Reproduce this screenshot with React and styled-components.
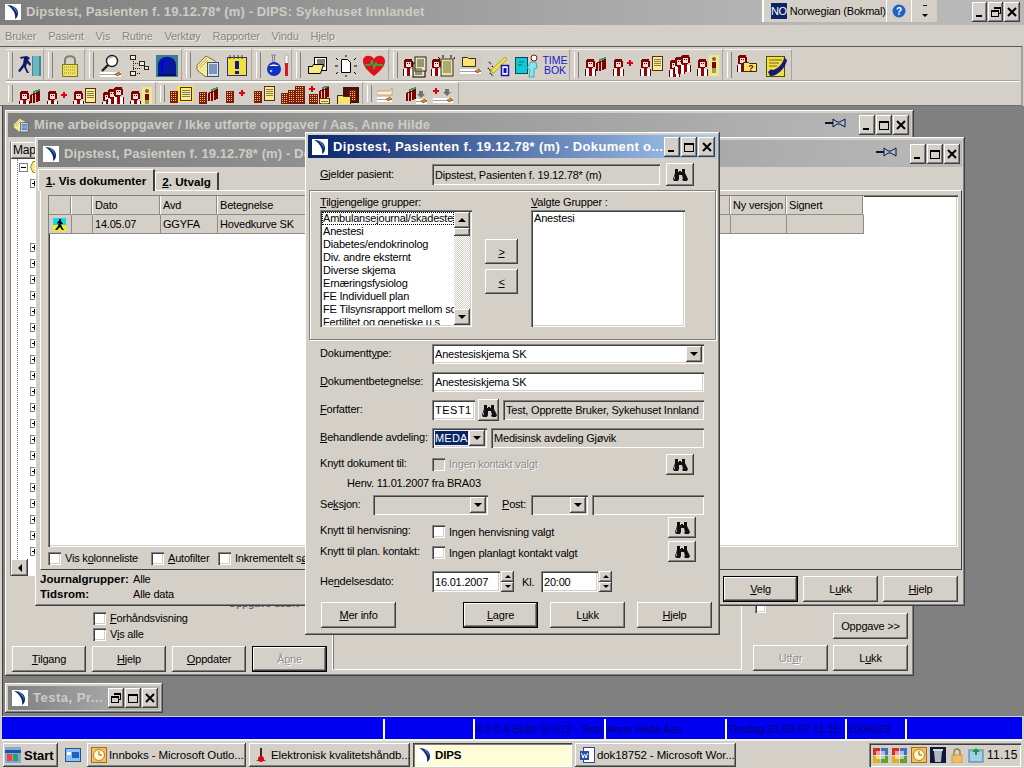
import React from 'react';
import styled, { createGlobalStyle, css } from 'styled-components';

const face = '#d4d0c8';

const GlobalStyle = createGlobalStyle`
  html, body { margin: 0; padding: 0; background: ${face}; overflow: hidden; }
  body { font-family: "Liberation Sans", Arial, sans-serif; font-size: 11px; letter-spacing: -0.2px; color: #000; }
  * { box-sizing: border-box; }
  u { text-underline-offset: 1px; }
  svg { flex: none; }
`;

const raised = css`
  background: ${face};
  box-shadow: inset -1px -1px 0 #404040, inset 1px 1px 0 #fff, inset -2px -2px 0 #808080;
`;
const sunken = css`
  box-shadow: inset 1px 1px 0 #808080, inset 2px 2px 0 #404040, inset -1px -1px 0 #fff, inset -2px -2px 0 ${face};
`;

const Screen = styled.div`
  width: 1024px;
  height: 768px;
  display: flex;
  flex-direction: column;
  overflow: hidden;
  background: ${face};
`;

/* main window chrome */
const MainTitle = styled.div`
  height: 25px;
  display: flex;
  align-items: flex-start;
  padding-left: 5px;
  background: linear-gradient(90deg, #7e7e7e, #b8b8b8 80%);
`;
const LogoSlot = styled.span`
  padding-top: 4px;
`;
const TitleText = styled.div`
  font-weight: 700;
  font-size: 13px;
  letter-spacing: ${p => p.$spacing ?? 0.1}px;
  color: ${p => p.$color || '#cfccc4'};
  white-space: nowrap;
  overflow: hidden;
  line-height: 24px;
  padding-left: 5px;
`;
const LangBar = styled.div`
  margin-left: auto;
  width: 175px;
  height: 22px;
  display: flex;
  align-items: center;
  background: ${face};
  border-left: 2px solid #fff;
  padding-left: 7px;
`;
const LangBadge = styled.span`
  width: 16px;
  height: 16px;
  background: #0a246a;
  color: #fff;
  font-size: 11px;
  line-height: 16px;
  text-align: center;
  letter-spacing: -0.4px;
`;
const LangName = styled.span`
  margin-left: 3px;
  width: 100px;
  white-space: nowrap;
`;
const LangCell = styled.span`
  width: 28px;
  height: 22px;
  display: flex;
  align-items: center;
  justify-content: center;
  border-left: 1px solid #fff;
`;
const MainControls = styled.div`
  margin-left: 35px;
  margin-right: 4px;
  padding-top: 2px;
  display: flex;
  gap: 1px;
`;
const WinControls = styled.div`
  margin-left: auto;
  display: flex;
  gap: 1px;
  align-items: center;
`;
const WinBtnBox = styled.span`
  ${raised};
  width: ${p => p.$w || 16}px;
  height: 20px;
  display: flex;
  align-items: center;
  justify-content: center;
`;
const Glyph = ({ kind }) => (
  <svg width="12" height="12" viewBox="0 0 12 12" fill="none" stroke="#000" shapeRendering="crispEdges">
    {kind === 'min' && <rect x="2" y="9" width="6" height="2" fill="#000" stroke="none" />}
    {kind === 'max' && <path d="M1.5 2.5h9v8h-9zM1.5 3.5h9" />}
    {kind === 'restore' && <path d="M3.5 1.5h7v6h-2M3.5 2.5h7M1.5 4.5h7v6h-7zM1.5 5.5h7" />}
    {kind === 'close' && <path d="M2 2l8 8M10 2l-8 8" strokeWidth="2" shapeRendering="auto" />}
  </svg>
);
const WinBtn = ({ kind, w }) => <WinBtnBox $w={w}><Glyph kind={kind} /></WinBtnBox>;

const Logo = () => (
  <svg width="16" height="16" viewBox="0 0 16 16">
    <rect width="16" height="16" fill="#fff" />
    <path d="M2 1c6 0 11 3 11 8 0 3-1 5-3 6 1-4-1-10-8-14z" fill="#0a246a" />
    <path d="M6 2c4 1 6 4 6 8-1-3-3-6-6-8z" fill="#6a8ac8" />
  </svg>
);

const MenuBar = styled.div`
  height: 21px;
  display: flex;
  align-items: center;
  gap: 12px;
  padding-left: 5px;
  background: ${face};
`;
const MenuItem = styled.span`
  color: #858585;
  text-shadow: 1px 1px 0 #eeeae4;
`;

/* toolbars */
const Toolbars = styled.div`
  height: 60px;
  background: ${face};
  border-top: 1px solid #5a5a5a;
  border-bottom: 1px solid #6e6e6e;
  border-right: 2px solid #a0a0a0;
  margin-right: 1px;
  padding: 2px 0 0 6px;
`;
const ToolRow = styled.div`
  display: flex;
  gap: 2px;
  height: ${p => p.$h}px;
  overflow: hidden;
`;
const ToolGroup = styled.div`
  width: ${p => p.$w}px;
  display: flex;
  padding-left: 10px;
  position: relative;
  border-right: 1px solid #a8a49c;
  border-top: 1px solid #f4f2ee;
  &::before {
    content: '';
    position: absolute;
    left: 2px;
    top: 2px;
    bottom: 2px;
    width: 3px;
    background: ${face};
    border-left: 1px solid #fff;
    border-right: 1px solid #808080;
  }
`;
const ToolSlot = styled.span`
  flex: 1;
  display: flex;
  justify-content: center;
  padding-top: ${p => p.$pt}px;
`;
const TimeBok = styled.span`
  color: #1818c8;
  font-size: 10.5px;
  line-height: 10px;
  text-align: center;
  padding-top: 1px;
  letter-spacing: 0;
`;
const RowDivider = styled.div`
  height: 2px;
  margin-right: 2px;
  border-top: 1px solid #a8a49c;
  border-bottom: 1px solid #fff;
`;

/* pixel drawings for the toolbar */
const Person = ({ x = 0, y = 0 }) => (
  <g transform={`translate(${x} ${y})`} shapeRendering="crispEdges">
    <rect x="2" y="0" width="7" height="3" fill="#800000" />
    <rect x="1" y="1" width="2" height="8" fill="#800000" />
    <rect x="8" y="2" width="2" height="6" fill="#800000" />
    <rect x="3" y="3" width="5" height="5" fill="#f0e0d8" />
    <rect x="4" y="4" width="1" height="1" fill="#400000" />
    <rect x="6" y="4" width="1" height="1" fill="#400000" />
    <rect x="3" y="8" width="5" height="1" fill="#800000" />
    <rect x="0" y="10" width="11" height="7" fill="#fff" />
    <rect x="0" y="10" width="1" height="7" fill="#600000" />
    <rect x="10" y="10" width="1" height="7" fill="#600000" />
    <rect x="4" y="9" width="3" height="8" fill="#a00000" />
  </g>
);
const Building = ({ x = 0, y = 0, w = 8, h = 12 }) => {
  const dots = [];
  for (let r = 1; r < h - 1; r += 2) for (let c = 1; c < w - 1; c += 2) dots.push(<rect key={`${r}-${c}`} x={c} y={r} width="1" height="1" fill="#ffcc30" />);
  return <g transform={`translate(${x} ${y})`} shapeRendering="crispEdges"><rect width={w} height={h} fill="#7a1a10" />{dots}</g>;
};
const Plus = ({ x = 0, y = 0 }) => <path transform={`translate(${x} ${y})`} d="M2 0h2v2h2v2h-2v2h-2v-2h-2v-2h2z" fill="#e00010" />;
const Note = ({ x = 0, y = 0, w = 9, h = 11, fill = '#ffe898' }) => (
  <g transform={`translate(${x} ${y})`} shapeRendering="crispEdges">
    <rect x=".5" y=".5" width={w} height={h} fill={fill} stroke="#5a3000" />
    <path d={`M2 3h${w - 3}M2 5h${w - 3}M2 7h${w - 3}M2 9h${w - 3}`} stroke="#808040" />
  </g>
);
const Bars = ({ x = 0, y = 0 }) => (
  <g transform={`translate(${x} ${y})`} shapeRendering="crispEdges">
    <path d="M1 5l8-3v9M4 4v9M7 3v9M1 5v8" stroke="#800000" strokeWidth="1.4" fill="none" />
    <path d="M3 2l7-2" stroke="#30a060" strokeWidth="2" />
  </g>
);
const Bed = ({ x = 0, y = 0, w = 20 }) => (
  <g transform={`translate(${x} ${y})`}>
    <rect width={w} height="5" fill="#fff" />
    <rect y="2" width={w} height="1" fill="#a0a0a0" />
    <path d={`M${w - 6} 2l4-2 2 2-4 2z`} fill="#e08020" stroke="#503000" strokeWidth=".5" />
  </g>
);
const Down = ({ x = 0, y = 0 }) => <path transform={`translate(${x} ${y})`} d="M2 0h4v3h2l-4 4-4-4h2z" fill="#707070" />;
const Folder = ({ x = 0, y = 0, fill = '#ffe070' }) => (
  <path transform={`translate(${x} ${y})`} d="M.5 2.5h5l1 1h7v8h-13z" fill={fill} stroke="#303000" />
);

const drawings = {
  exit: <g><rect x="14" y="2" width="9" height="20" fill="#3c8a98" /><path d="M16 2v20M18 2v20M20 2v20" stroke="#a0e0e8" /><path d="M9 2l3 2-2 2 3 4-1 2-3-3-1 4 3 6H9l-3-6-4 5-2-1 5-7 1-6-3 1-1-2z" fill="#0a1a68" /></g>,
  lock: <g><path d="M7 11V6c0-5 10-5 10 0v5" fill="none" stroke="#80806a" strokeWidth="2" /><rect x="4.5" y="10.5" width="15" height="12" fill="#f0e060" stroke="#807820" /><path d="M6 13h12M6 16h12M6 19h12" stroke="#a09020" strokeDasharray="1 1" /></g>,
  search: <g><circle cx="13" cy="7" r="5.5" fill="#fff" stroke="#202020" strokeWidth="1.4" /><path d="M9 11l-6 6" stroke="#202020" strokeWidth="2.4" /><path d="M10 5c1-2 3-2 4-2" stroke="#909090" fill="none" /><Bed x="1" y="18" w="21" /></g>,
  tree: <g fill="#f8f0c0" stroke="#202020" shapeRendering="crispEdges"><path d="M6 5v15M6 9h7M6 14h7M6 19h7" fill="none" strokeDasharray="1 1" /><rect x="3.5" y="1.5" width="5" height="4" /><rect x="3.5" y="17.5" width="5" height="4" /><rect x="12.5" y="7.5" width="5" height="4" /><rect x="17.5" y="12.5" width="4" height="3" /></g>,
  arch: <g><rect x="1" y="1" width="22" height="22" fill="#3c8088" /><path d="M3 21v-10c0-11 18-11 18 0v10z" fill="#0818a0" /><path d="M6 20v-9c0-7 8-8 11-4-5-2-9 1-9 5v8z" fill="#0000f0" /><rect x="3" y="20" width="18" height="2" fill="#001060" /></g>,
  stack: <g><path d="M1 11l9-9 9 5-1 10-8 6-9-7z" fill="#f4ec9c" stroke="#807040" /><path d="M3 12l8-8M4 14l8-8" stroke="#c0b060" /><rect x="11.5" y="8.5" width="11" height="14" fill="#d0e0f0" stroke="#405070" /><path d="M13 11h8M13 13h8M13 15h8M13 17h8M13 19h8" stroke="#304890" /></g>,
  notice: <g><rect x="2.5" y="3.5" width="19" height="18" fill="#f0e040" stroke="#30306a" /><path d="M5 1v4M9 1v4M13 1v4M17 1v4" stroke="#503820" /><rect x="10" y="7" width="4" height="8" fill="#0a1a88" /><rect x="10" y="17" width="4" height="3" fill="#0a1a88" /></g>,
  flask: <g><path d="M5 1h5M6.5 1v8M8.5 1v8" stroke="#808898" fill="none" /><circle cx="8" cy="15" r="7" fill="#1030c0" /><path d="M3 12c2-2 7-2 10 0z" fill="#fff" /><circle cx="5" cy="17" r="1.3" fill="#a0b8ff" /><rect x="19" y="1" width="3" height="10" fill="#fff" stroke="#909090" strokeWidth=".6" /><rect x="19" y="9" width="3" height="13" fill="#d81820" /></g>,
  folderDoc: <g><rect x="8.5" y="3.5" width="12" height="13" fill="#fff" stroke="#000" /><path d="M11 6h8M11 8h8M11 10h8M11 12h8" stroke="#000" /><path d="M2.5 12.5h4l1-2h10l-3 9h-12z" fill="#f8e880" stroke="#000" /></g>,
  docRays: <g stroke="#000" fill="none"><path d="M7.5 5.5h6l3 3v10h-9z" fill="#fff" /><path d="M12 1v2M2 4l2 2M22 4l-2 2M1 12h3M20 12h3M2 20l2-2M22 20l-2-2M12 21v2" /></g>,
  heart: <g><path d="M12 22C7 18 1 13 1 7c0-6 8-7 11-2 3-5 11-4 11 2 0 6-6 11-11 15z" fill="#e01020" /><path d="M3 11h5l2-4 2 7 2-5 1 2h6" stroke="#20c040" strokeWidth="1.4" fill="none" /></g>,
  personFiles: <g><Person x="0" y="5" /><rect x="10" y="9" width="12" height="14" fill="#e8e0b0" stroke="#000" /><rect x="12" y="3" width="11" height="14" fill="#f0e8b0" stroke="#202020" /><path d="M14 6h7M14 8h7M14 10h7M14 12h7M12 15h7M12 18h7M12 20h7" stroke="#404040" /></g>,
  personNote: <g><Person x="0" y="5" /><rect x="10" y="5" width="12" height="17" fill="#e8e0a0" stroke="#303030" /><path d="M12 8h8M12 10h8M12 12h8M12 14h8M12 16h8M12 18h8" stroke="#707040" /><path d="M12 1v3M20 1v3M9 5l-2-2M23 5l1-2" stroke="#000" /></g>,
  folderBed: <g><rect x="0" y="0" width="23" height="22" fill="#c8c8c8" opacity=".55" /><Folder x="3" y="1" /><Bed x="1" y="15" w="21" /></g>,
  pencil: <g><path d="M3 17L18 3l2 2L7 19z" fill="#f0e040" stroke="#908010" strokeWidth=".6" /><path d="M2 8l2 2M5 12l1 1M1 14l3 3M3 19l3 3" stroke="#000" strokeWidth="1.5" strokeDasharray="1 1" /><rect x="14.5" y="11.5" width="7" height="10" fill="#fff" stroke="#1010b0" strokeWidth="1.5" /><rect x="16.5" y="14" width="3" height="5" fill="#1010b0" /></g>,
  tealPerson: <g><rect x="0.5" y="3.5" width="12" height="16" fill="#10c8d8" stroke="#084858" /><path d="M4 8h5M3 11h4" stroke="#086878" /><circle cx="19" cy="4" r="3" fill="#fff" stroke="#901010" /><path d="M16 8l5 0 1 6-3 1v8h-5l1-7-3-2z" fill="#80e8f0" stroke="#108090" strokeWidth=".6" /></g>,
  pGroup: <g><Person x="1" y="5" /><Bars x="12" y="4" /></g>,
  pPlus: <g><Person x="1" y="5" /><Plus x="15" y="6" /></g>,
  pDoc: <g><Person x="0" y="5" /><Note x="12" y="2" w="10" h="14" /></g>,
  pMany: <g><Person x="1" y="6" /><Person x="6" y="3" /><Person x="12" y="1" /></g>,
  pMan: <g><rect x="13" y="1" width="10" height="21" fill="#f2e888" /><Person x="1" y="5" /><circle cx="18" cy="5" r="2" fill="#806040" /><rect x="16" y="8" width="4" height="6" fill="#800000" /><path d="M17 14v5M19 14v5" stroke="#306030" /></g>,
  bDoc: <g><rect x="8" y="0" width="15" height="16" fill="#fff020" /><Building x="0" y="5" /><Note x="10" y="1" w="11" h="13" /></g>,
  bGroup: <g><Building x="1" y="6" /><Bars x="10" y="2" /></g>,
  bPlus: <g><Building x="1" y="5" /><Plus x="14" y="4" /></g>,
  bNote: <g><Building x="1" y="5" /><Note x="11" y="0" w="10" h="14" /></g>,
  bMany: <g><Building x="0" y="7" w="9" h="11" /><Building x="7" y="4" w="10" h="14" /><Building x="14" y="0" w="10" h="18" /></g>,
  bPlusGroup: <g><Plus x="1" y="0" /><Building x="1" y="8" w="9" h="10" /><Bars x="11" y="0" /><Note x="11" y="12" w="10" h="5" /></g>,
  bFolder: <g><rect x="7" y="1" width="16" height="16" fill="#4a1008" /><Building x="13" y="4" w="7" h="11" /><Folder x="1" y="7" /></g>,
  smallBed: <g><path d="M0 5h13l2-3v7H0z" fill="#f8f0e0" stroke="#c09040" strokeWidth=".7" /><Bed x="0" y="11" w="15" /></g>,
  groupDown: <g><Bars x="1" y="2" /><Down x="12" y="5" /><Bed x="11" y="13" w="11" /></g>,
  plusDown: <g><Plus x="1" y="2" /><Down x="11" y="3" /><Bed x="1" y="12" w="20" /></g>,
  folderQ: <g><Person x="0" y="1" /><Folder x="6" y="6" /><text x="14" y="17" fontSize="9" fontWeight="700" fill="#800000" textAnchor="middle">?</text></g>,
  phoneNote: <g><rect x="1.5" y="2.5" width="18" height="20" fill="#f0e040" stroke="#505000" /><path d="M4 6h13M4 9h10M4 12h8" stroke="#806020" /><path d="M5 22c6 1 16-8 17-16l-3-3c0 6-7 13-12 13l-1-1-3 3z" fill="#181878" /></g>,
};
const Draw = ({ name, size = 24 }) => <svg width={size} height={size} viewBox="0 0 24 24">{drawings[name]}</svg>;

const row1 = [
  { w: 38, items: ['exit'] },
  { w: 39, items: ['lock'] },
  { w: 95, items: ['search', 'tree', 'arch'] },
  { w: 68, items: ['stack', 'notice'] },
  { w: 38, items: ['flask'] },
  { w: 95, items: ['folderDoc', 'docRays', 'heart'] },
  { w: 179, items: ['personFiles', 'personNote', 'folderBed', 'pencil', 'tealPerson', 'TIME'] },
  { w: 151, items: ['pGroup', 'pPlus', 'pDoc', 'pMany', 'pMan'] },
  { w: 67, items: ['folderQ', 'phoneNote'] },
];
const row2 = [
  { w: 150, items: ['pGroup', 'pPlus', 'pDoc', 'pMany', 'pMan'] },
  { w: 205, items: ['bDoc', 'bGroup', 'bPlus', 'bNote', 'bMany', 'bPlusGroup', 'bFolder'] },
  { w: 94, items: ['smallBed', 'groupDown', 'plusDown'] },
];

/* MDI desktop: the windows sit on a free canvas */
const Mdi = styled.div`
  position: relative;
  height: 610px;
  margin-left: 2px;
  border-left: 1px solid #404040;
  background: #808080;
  overflow: hidden;
`;
const Win = styled.section`
  ${raised};
  position: absolute;
  left: ${p => p.$x - 3}px;
  top: ${p => p.$y}px;
  width: ${p => p.$w}px;
  height: ${p => p.$h}px;
  padding: 3px;
  display: flex;
  flex-direction: column;
`;
const WinTitle = styled.div`
  height: ${p => p.$h}px;
  flex: none;
  display: flex;
  align-items: center;
  padding: 0 ${p => p.$pr ?? 3}px 0 ${p => p.$pl ?? 3}px;
  background: ${p => (p.$active
    ? 'linear-gradient(90deg, #0a246a, #a6caf0)'
    : 'linear-gradient(90deg, #7f7f7f, #b9b9b9)')};
`;
const PinSvg = styled.svg`
  margin: 0 11px 4px 0;
`;
const Pin = () => (
  <PinSvg width="22" height="12" viewBox="0 0 22 12">
    <path d="M0 6h8" stroke="#101030" strokeWidth="2" />
    <path d="M8 2l4 3h3l5-3v8l-5-3h-3l-4 3z" fill="#a8c4d8" stroke="#101030" />
  </PinSvg>
);
const Binocs = () => (
  <svg width="16" height="13" viewBox="0 0 16 13">
    <path d="M3 1h3v3h1v-1h2v1h1V1h3v4l3 6-1 2h-4l-1-2V7H7v4l-1 2H2l-1-2 2-6z" fill="#101010" />
    <path d="M3 7l-1 4h1zM11 7l-1 4h1z" fill="#d0d0d0" />
  </svg>
);
const Btn = styled.button`
  ${raised};
  border: 0;
  padding: 0;
  width: ${p => p.$w || 75}px;
  height: ${p => p.$h || 26}px;
  font: inherit;
  letter-spacing: inherit;
  flex: none;
  margin-left: ${p => p.$ml || 0}px;
  color: ${p => (p.$off ? '#909090' : '#000')};
  text-shadow: ${p => (p.$off ? '1px 1px 0 #fff' : 'none')};
  display: flex;
  align-items: center;
  justify-content: center;
  ${p => p.$def && css`
    outline: 1px solid #000;
    outline-offset: -1px;
    box-shadow: inset -2px -2px 0 #404040, inset 2px 2px 0 #fff, inset -3px -3px 0 #808080;
  `}
`;
const BinocBtn = ({ w = 28, h = 21, ml }) => <Btn $w={w} $h={h} $ml={ml}><Binocs /></Btn>;

const Box = styled.span`
  ${sunken};
  flex: none;
  display: inline-block;
  width: 13px;
  height: 13px;
  background: ${p => (p.$off ? face : '#fff')};
`;
const CheckText = styled.span`
  color: ${p => (p.$off ? '#8c8c8c' : '#000')};
  text-shadow: ${p => (p.$off ? '1px 1px 0 #fff' : 'none')};
  white-space: nowrap;
  margin-left: 4px;
`;

/* work window */
const WorkBody = styled.div`
  flex: 1;
  display: flex;
  flex-direction: column;
  padding: 5px 0 0 2px;
`;
const TreePanel = styled.div`
  width: 40px;
  height: 434px;
  flex: none;
  display: flex;
  flex-direction: column;
  background: #fff;
  border-left: 1px solid #808080;
`;
const TreeHead = styled.div`
  ${raised};
  height: 17px;
  padding: 1px 0 0 2px;
  font-size: 12px;
`;
const TreeLines = styled.div`
  flex: 1;
  margin-left: 6px;
  padding: 17px 0 0 12px;
  border-left: 1px dotted #808080;
  overflow: hidden;
`;
const TreeRoot = styled.div`
  display: flex;
  align-items: center;
  margin: -15px 0 6px -11px;
`;
const RootIcon = styled.svg`
  margin-left: 2px;
`;
const Plusbox = styled.span`
  width: 9px;
  height: 9px;
  flex: none;
  display: block;
  border: 1px solid #808080;
  background: #fff;
  margin-bottom: ${p => p.$mb ?? 7}px;
  position: relative;
  &::before {
    content: '';
    position: absolute;
    left: 1px; right: 1px; top: 3px; height: 1px;
    background: #000;
  }
  &::after {
    content: '';
    display: ${p => (p.$minus ? 'none' : 'block')};
    position: absolute;
    top: 1px; bottom: 1px; left: 3px; width: 1px;
    background: #000;
  }
`;
const ScrollBtn = styled.span`
  ${raised};
  width: 17px;
  height: 17px;
  flex: none;
  display: flex;
  align-items: center;
  justify-content: center;
`;
const Tri = styled.span`
  width: 0;
  height: 0;
  display: block;
  ${p => p.$dir === 'left' && 'border: 4px solid transparent; border-left: 0; border-right: 4px solid #000;'}
  ${p => p.$dir === 'up' && 'border: 4px solid transparent; border-top: 0; border-bottom: 4px solid #000;'}
  ${p => p.$dir === 'down' && 'border: 4px solid transparent; border-bottom: 0; border-top: 4px solid #000;'}
`;
const WorkBottom = styled.div`
  flex: 1;
  display: flex;
  margin-left: -2px;
`;
const WorkLeft = styled.div`
  width: 325px;
  flex: none;
  padding-top: 21px;
`;
const PeekText = styled.div`
  height: 12px;
  line-height: 12px;
  margin: 0 0 1px 220px;
  color: #505050;
`;
const ChecksCol = styled.div`
  margin-left: 85px;
`;
const CheckRow = styled.label`
  display: flex;
  align-items: center;
  height: 16px;
`;
const WorkButtons = styled.div`
  display: flex;
  gap: 6px;
  margin: 4px 0 0 4px;
`;
const WorkFrame = styled.div`
  width: 409px;
  height: 94px;
  flex: none;
  border-left: 1px solid #808080;
  border-bottom: 1px solid #fff;
  border-right: 1px solid #fff;
  box-shadow: -1px 0 0 #fff;
`;
const WorkRight = styled.div`
  flex: 1;
  padding: 26px 3px 0 10px;
  display: flex;
  flex-direction: column;
  align-items: flex-end;
`;
const PeekBox = styled.span`
  ${sunken};
  width: 11px;
  height: 11px;
  align-self: flex-start;
  background: #fff;
  margin: 0 0 0 3px;
`;
const WorkRow = styled.div`
  display: flex;
  gap: 5px;
  margin-top: 6px;
`;

/* document window */
const TabRow = styled.div`
  height: 23px;
  flex: none;
  display: flex;
  align-items: flex-end;
`;
const Tab = styled.div`
  height: ${p => (p.$active ? 22 : 18)}px;
  width: ${p => p.$w}px;
  display: flex;
  align-items: center;
  justify-content: center;
  font-weight: 700;
  font-size: 11.7px;
  letter-spacing: 0;
  border-top: 1px solid #fff;
  border-left: 1px solid #fff;
  border-right: 2px solid #404040;
  position: relative;
  z-index: ${p => (p.$active ? 1 : 0)};
  margin-bottom: ${p => (p.$active ? -1 : 0)}px;
  background: ${face};
`;
const TabPanel = styled.div`
  height: 380px;
  flex: none;
  margin-left: 2px;
  padding: 4px 3px 0 7px;
  display: flex;
  flex-direction: column;
  border-top: 1px solid #fff;
  border-left: 1px solid #fff;
  border-right: 1px solid #404040;
  border-bottom: 1px solid #404040;
`;
const GridWrap = styled.div`
  ${sunken};
  height: 352px;
  flex: none;
  background: #fff;
  padding: 1px 2px 2px 1px;
`;
const DocGrid = styled.div`
  display: grid;
  grid-template-columns: 23px 21px 68px 57px 513px 56px 77px;
  grid-auto-rows: 19px;
  width: 815px;
`;
const Cell = styled.div`
  background: ${face};
  padding-left: 2px;
  line-height: 19px;
  white-space: nowrap;
  overflow: hidden;
  border-right: 1px solid ${p => (p.$head ? '#fff' : '#8c8c84')};
  border-bottom: 1px solid #8c8c84;
  box-shadow: ${p => (p.$head ? 'inset -1px 0 0 #8c8c84' : 'none')};
`;
const PanelChecks = styled.div`
  display: flex;
  align-items: center;
  height: 22px;
`;
const PanelCheck = styled.label`
  display: flex;
  align-items: center;
  width: ${p => p.$w}px;
  flex: none;
`;
const DocFooter = styled.div`
  flex: 1;
  display: flex;
  padding: 2px 4px 0 2px;
  justify-content: space-between;
`;
const InfoGrid = styled.div`
  display: grid;
  grid-template-columns: 93px auto;
  grid-auto-rows: 14.5px;
  line-height: 14px;
  b { font-weight: 700; font-size: 11.5px; letter-spacing: 0; }
`;
const DocButtons = styled.div`
  display: flex;
  gap: 5px;
  padding-top: 4px;
`;

/* dialog */
const Row = styled.div`
  flex: none;
  height: ${p => p.$h || 20}px;
  margin-top: ${p => p.$mt || 0}px;
  padding: 0 0 ${p => p.$pb || 0}px 12px;
  display: flex;
  align-items: ${p => (p.$low ? 'flex-end' : 'center')};
`;
const Label = styled.span`
  width: ${p => p.$w || 112}px;
  flex: none;
  white-space: nowrap;
  padding-bottom: 2px;
  margin-left: ${p => p.$ml || 0}px;
`;
const Field = styled.div`
  ${sunken};
  flex: none;
  width: ${p => p.$w}px;
  height: ${p => p.$h || 20}px;
  margin-left: ${p => p.$ml || 0}px;
  background: ${p => (p.$plain ? face : '#fff')};
  display: flex;
  align-items: center;
  padding: 0 2px 0 3px;
  white-space: nowrap;
  overflow: hidden;
  letter-spacing: ${p => p.$ls ?? -0.2}px;
`;
const ComboText = styled.span`
  flex: 1;
  min-width: 0;
  overflow: hidden;
  ${p => p.$sel && css`
    flex: none;
    background: #0a246a;
    color: #fff;
    outline: 1px dotted #e0e0e0;
    line-height: 14px;
    letter-spacing: .2px;
  `}
`;
const ComboArrow = styled.span`
  ${raised};
  width: 16px;
  height: 16px;
  flex: none;
  margin-left: auto;
  display: flex;
  align-items: center;
  justify-content: center;
`;
const Combo = ({ w, ml, plain, sel, children }) => (
  <Field $w={w} $ml={ml} $plain={plain}>
    <ComboText $sel={sel}>{children}</ComboText>
    <ComboArrow><Tri $dir="down" /></ComboArrow>
  </Field>
);
const GroupBox = styled.div`
  height: 150px;
  flex: none;
  margin: 4px 1px 0 1px;
  border: 1px solid #808080;
  box-shadow: inset 1px 1px 0 #fff, 1px 1px 0 #fff;
  padding: 5px 0 0 10px;
  display: flex;
`;
const GroupCol = styled.div`
  width: ${p => p.$w}px;
  flex: none;
`;
const GroupLabel = styled.div`
  height: 14px;
  line-height: 13px;
`;
const ListBox = styled.div`
  ${sunken};
  height: 117px;
  background: #fff;
  display: flex;
  padding: 2px;
  overflow: hidden;
`;
const ListItems = styled.div`
  flex: 1;
  min-width: 0;
  overflow: hidden;
`;
const ListItem = styled.div`
  height: 13px;
  line-height: 13px;
  padding-left: 1px;
  white-space: nowrap;
  ${p => p.$focus && 'outline: 1px dotted #000; outline-offset: -1px;'}
`;
const ListScroll = styled.div`
  width: 16px;
  flex: none;
  display: flex;
  flex-direction: column;
  background: repeating-conic-gradient(#d4d0c8 0 25%, #fff 0 50%) 0 0 / 2px 2px;
`;
const ScrollEnd = styled(ScrollBtn)`
  width: 16px;
  height: ${p => p.$h || 16}px;
`;
const ScrollThumb = styled.span`
  ${raised};
  height: 8px;
  display: block;
  flex: none;
`;
const Spacer = styled.span`
  flex: 1;
`;
const EndGap = styled.span`
  flex: none;
  width: ${p => p.$w}px;
`;
const TopSlot = styled.span`
  align-self: flex-start;
`;
const MoveCol = styled.div`
  width: 46px;
  flex: none;
  padding-top: 43px;
  display: flex;
  flex-direction: column;
  gap: 5px;
  margin-right: 13px;
`;
const IndentText = styled.span`
  padding-left: 27px;
`;
const SpinBox = styled.span`
  width: 13px;
  height: 21px;
  flex: none;
  margin-left: 1px;
  display: flex;
  flex-direction: column;
`;
const SpinPart = styled.span`
  ${raised};
  flex: 1;
  display: flex;
  align-items: center;
  justify-content: center;
`;
const TinyTri = styled(Tri)`
  border-width: 3px;
  ${p => p.$dir === 'up' && 'border-top: 0;'}
  ${p => p.$dir === 'down' && 'border-bottom: 0;'}
`;
const Spin = () => <SpinBox><SpinPart><TinyTri $dir="up" /></SpinPart><SpinPart><TinyTri $dir="down" /></SpinPart></SpinBox>;
const KlLabel = styled.span`
  width: 27px;
  flex: none;
  padding-left: 8px;
`;
const DialogButtons = styled(Row)`
  padding-left: 13px;
`;

/* minimized */
const MiniTitle = styled(TitleText)`
  flex: 1;
`;

/* status and task bars */
const StatusBar = styled.div`
  height: 24px;
  margin: 1px 2px 2px 2px;
  display: flex;
  gap: 2px;
  border-top: 2px solid #0000e8;
  border-bottom: 2px solid #f4f4f4;
  background: #fff;
`;
const StatusCell = styled.span`
  width: ${p => p.$w}px;
  flex: ${p => (p.$w ? 'none' : 1)};
  background: #0000f0;
  color: #000070;
  line-height: 20px;
  font-size: 11px;
  letter-spacing: 0;
  padding-left: 1px;
  white-space: nowrap;
  overflow: hidden;
`;
const Taskbar = styled.div`
  flex: 1;
  display: flex;
  align-items: center;
  padding: 0 3px 1px 3px;
`;
const StartBtn = styled(Btn)`
  width: 55px;
  height: 24px;
  justify-content: flex-start;
  padding-left: 2px;
  font-weight: 700;
  font-size: 13px;
  letter-spacing: 0;
  gap: 3px;
`;
const Quick = styled.span`
  width: 29px;
  flex: none;
  display: flex;
  justify-content: center;
`;
const TaskBtn = styled(Btn)`
  width: ${p => p.$w}px;
  height: 24px;
  justify-content: flex-start;
  padding-left: 4px;
  margin-right: 3px;
  gap: 2px;
  font-size: 11.5px;
  letter-spacing: -0.1px;
  white-space: nowrap;
  overflow: hidden;
  ${p => p.$on && css`
    background: #fffcd8;
    box-shadow: inset 1px 1px 0 #404040, inset 2px 2px 0 #808080, inset -1px -1px 0 #fff;
    font-weight: 700;
  `}
`;
const Tray = styled.div`
  ${sunken};
  margin-left: auto;
  width: 152px;
  height: 24px;
  display: flex;
  align-items: center;
  padding-left: 4px;
  gap: 3px;
  font-size: 12px;
  letter-spacing: .3px;
`;

const Mini = ({ name }) => (
  <svg width="16" height="16" viewBox="0 0 16 16">
    {name === 'start' && <g><rect width="16" height="16" rx="1" fill="#80a8d8" /><rect y="3" width="16" height="3" fill="#2050a0" /><rect x="2" y="7" width="5" height="7" fill="#f04040" /><rect x="8" y="7" width="5" height="7" fill="#30a060" /></g>}
    {name === 'quick' && <g><rect x=".5" y="1.5" width="15" height="13" fill="#90c0f0" stroke="#2050a0" /><rect x="2" y="5" width="4" height="3" fill="#fff" /><rect x="7" y="5" width="7" height="6" fill="#2060c0" /></g>}
    {name === 'clock' && <g><rect x=".5" y=".5" width="15" height="15" fill="#f0c060" stroke="#a07020" /><circle cx="8" cy="8" r="5.5" fill="#fff8d0" stroke="#c08020" /><path d="M8 4v4h3" stroke="#a06000" fill="none" /></g>}
    {name === 'hand' && <g><path d="M3 14l5-3 5 3z" fill="#a01010" /><rect x="7" y="1" width="2" height="9" fill="#502020" /><circle cx="8" cy="12" r="3" fill="#d01018" /></g>}
    {name === 'word' && <g><rect x="4.5" y=".5" width="11" height="15" fill="#fff" stroke="#304890" /><rect x="1" y="4" width="9" height="9" fill="#2850b0" /><path d="M2.5 6l1.5 5 1.5-4 1.5 4 1.5-5" stroke="#fff" fill="none" /></g>}
    {name === 'office' && <g><rect x="0" y="1" width="7" height="7" fill="#d03020" /><rect x="8" y="1" width="7" height="7" fill="#4070c0" /><rect x="0" y="9" width="7" height="7" fill="#e0b020" /><rect x="8" y="9" width="7" height="7" fill="#60a030" /><rect x="3" y="4" width="9" height="8" fill="#fff" opacity=".55" /></g>}
    {name === 'bin' && <g><rect width="16" height="16" fill="#101838" /><path d="M4 4h8l-1 11H5z" fill="#b0b8c0" /><rect x="3" y="2" width="10" height="2" fill="#d0d8e0" /></g>}
    {name === 'lock' && <g><path d="M5 8V5c0-4 6-4 6 0v3" fill="none" stroke="#908050" strokeWidth="1.4" /><rect x="3" y="8" width="10" height="8" fill="#f0c060" stroke="#b08030" strokeWidth=".6" /></g>}
    {name === 'net' && <g><rect x="1" y="3" width="14" height="12" fill="#a0d0e8" stroke="#4080a0" /><path d="M8 1l4 4H9v3H7V5H4z" fill="#10a040" /></g>}
  </svg>
);

const groups = ['Ambulansejournal/skadeste', 'Anestesi', 'Diabetes/endokrinolog', 'Div. andre eksternt', 'Diverse skjema', 'Ernæringsfysiolog', 'FE Individuell plan', 'FE Tilsynsrapport mellom so', 'Fertilitet og genetiske u.s'];
const menus = ['Bruker', 'Pasient', 'Vis', 'Rutine', 'Verktøy', 'Rapporter', 'Vindu', 'Hjelp'];
const headCols = ['', '', 'Dato', 'Avd', 'Betegnelse', 'Ny versjon', 'Signert'];
const dataCols = ['', '', '14.05.07', 'GGYFA', 'Hovedkurve SK', '', ''];

const WalkerSvg = styled.svg`
  display: block;
  margin: 3px 0 0 2px;
`;
const Walker = () => (
  <WalkerSvg width="13" height="13" viewBox="0 0 13 13">
    <rect width="13" height="7" fill="#10d8e8" />
    <rect y="7" width="13" height="6" fill="#f8f000" />
    <path d="M6 1h2v2H6zM5 3h3l2 3H8l1 3 2 3H9L7 9l-3 3H2l3-4 1-3-2 1z" fill="#000" />
  </WalkerSvg>
);

export default function App() {
  return (
    <Screen>
      <GlobalStyle />
      <MainTitle>
        <LogoSlot><Logo /></LogoSlot>
        <TitleText $spacing={0.12}>Dipstest, Pasienten f. 19.12.78* (m) - DIPS: Sykehuset Innlandet</TitleText>
        <LangBar>
          <LangBadge>NO</LangBadge>
          <LangName>Norwegian (Bokmal)</LangName>
          <LangCell>
            <svg width="14" height="14" viewBox="0 0 14 14"><circle cx="7" cy="7" r="6.5" fill="#2060c8" /><text x="7" y="11" fontSize="10" fontWeight="700" fill="#fff" textAnchor="middle" fontFamily="Liberation Sans">?</text></svg>
          </LangCell>
          <LangCell>
            <svg width="8" height="14" viewBox="0 0 8 14"><path d="M2 1h4v1H2zM1 10h6L4 13z" fill="#000" /></svg>
          </LangCell>
        </LangBar>
        <MainControls>
          <WinBtn kind="min" w={15} />
          <WinBtn kind="restore" w={15} />
          <WinBtn kind="close" />
        </MainControls>
      </MainTitle>
      <MenuBar>
        {menus.map(m => <MenuItem key={m}>{m}</MenuItem>)}
      </MenuBar>
      <Toolbars>
        <ToolRow $h={31}>
          {row1.map((g, i) => (
            <ToolGroup key={i} $w={g.w}>
              {g.items.map(it => (
                <ToolSlot key={it} $pt={4}>
                  {it === 'TIME' ? <TimeBok>TIME<br />BOK</TimeBok> : <Draw name={it} />}
                </ToolSlot>
              ))}
            </ToolGroup>
          ))}
        </ToolRow>
        <RowDivider />
        <ToolRow $h={22}>
          {row2.map((g, i) => (
            <ToolGroup key={i} $w={g.w}>
              {g.items.map(it => <ToolSlot key={it} $pt={3}><Draw name={it} /></ToolSlot>)}
            </ToolGroup>
          ))}
        </ToolRow>
      </Toolbars>

      <Mdi>
        <Win $x={5} $y={4} $w={909} $h={566}>
          <WinTitle $h={24} $pr={2} $pl={5}>
            <Draw name="stack" size={16} />
            <TitleText>Mine arbeidsoppgaver / Ikke utførte oppgaver / Aas, Anne Hilde</TitleText>
            <WinControls>
              <Pin />
              <WinBtn kind="min" />
              <WinBtn kind="max" />
              <WinBtn kind="close" />
            </WinControls>
          </WinTitle>
          <WorkBody>
            <TreePanel>
              <TreeHead>Map</TreeHead>
              <TreeLines>
                <TreeRoot>
                  <Plusbox $minus $mb={0} />
                  <RootIcon width="12" height="12" viewBox="0 0 12 12"><path d="M3 .5h6l2.5 5.5-2.5 5.5h-6L.5 6z" fill="#ffe880" stroke="#909000" /></RootIcon>
                </TreeRoot>
                <Plusbox $mb={55} />
                {Array.from({ length: 20 }, (_, i) => <Plusbox key={i} />)}
              </TreeLines>
              <ScrollBtn><Tri $dir="left" /></ScrollBtn>
            </TreePanel>
            <WorkBottom>
              <WorkLeft>
                <PeekText>Oppgave utført</PeekText>
                <ChecksCol>
                  <CheckRow><Box /><CheckText><u>F</u>orhåndsvisning</CheckText></CheckRow>
                  <CheckRow><Box /><CheckText>V<u>i</u>s alle</CheckText></CheckRow>
                </ChecksCol>
                <WorkButtons>
                  <Btn $w={74}><span><u>T</u>ilgang</span></Btn>
                  <Btn $w={74}><span><u>H</u>jelp</span></Btn>
                  <Btn $w={74}><span><u>O</u>ppdater</span></Btn>
                  <Btn $w={75} $off $def><span>Å<u>p</u>ne</span></Btn>
                </WorkButtons>
              </WorkLeft>
              <WorkFrame />
              <WorkRight>
                <PeekBox />
                <Btn><span>Oppgave &gt;&gt;</span></Btn>
                <WorkRow>
                  <Btn $off><span>Utf<u>ø</u>r</span></Btn>
                  <Btn><span>L<u>u</u>kk</span></Btn>
                </WorkRow>
              </WorkRight>
            </WorkBottom>
          </WorkBody>
        </Win>

        <Win $x={35} $y={31} $w={930} $h={469}>
          <WinTitle $h={27} $pr={2} $pl={5}>
            <Logo />
            <TitleText>Dipstest, Pasienten f. 19.12.78* (m) - Dokumenter</TitleText>
            <WinControls>
              <Pin />
              <WinBtn kind="min" />
              <WinBtn kind="max" />
              <WinBtn kind="close" />
            </WinControls>
          </WinTitle>
          <TabRow>
            <Tab $active $w={117}><span><u>1</u>. Vis dokumenter</span></Tab>
            <Tab $w={64}><span><u>2</u>. Utvalg</span></Tab>
          </TabRow>
          <TabPanel>
            <GridWrap>
              <DocGrid>
                {headCols.map((c, i) => <Cell key={i} $head>{c}</Cell>)}
                {dataCols.map((c, i) => <Cell key={i}>{i === 0 ? <Walker /> : c}</Cell>)}
              </DocGrid>
            </GridWrap>
            <PanelChecks>
              <PanelCheck $w={103}><Box /><CheckText>Vis k<u>o</u>lonneliste</CheckText></PanelCheck>
              <PanelCheck $w={67}><Box /><CheckText><u>A</u>utofilter</CheckText></PanelCheck>
              <PanelCheck $w={160}><Box /><CheckText>Inkrementelt s<u>ø</u>k</CheckText></PanelCheck>
            </PanelChecks>
          </TabPanel>
          <DocFooter>
            <InfoGrid>
              <b>Journalgrupper:</b><span>Alle</span>
              <b>Tidsrom:</b><span>Alle data</span>
            </InfoGrid>
            <DocButtons>
              <Btn $def><span><u>V</u>elg</span></Btn>
              <Btn><span>L<u>u</u>kk</span></Btn>
              <Btn><span><u>H</u>jelp</span></Btn>
            </DocButtons>
          </DocFooter>
        </Win>

        <Win $x={305} $y={26} $w={415} $h={503}>
          <WinTitle $active $h={23} $pr={2} $pl={4}>
            <Logo />
            <TitleText $color="#fff" $spacing={0.35}>Dipstest, Pasienten f. 19.12.78* (m) - Dokument o...</TitleText>
            <WinControls>
              <WinBtn kind="min" />
              <WinBtn kind="max" />
              <WinBtn kind="close" w={17} />
            </WinControls>
          </WinTitle>
          <Row $h={23} $mt={5}>
            <Label><u>G</u>jelder pasient:</Label>
            <Field $w={228} $h={21} $plain>Dipstest, Pasienten f. 19.12.78* (m)</Field>
            <BinocBtn ml={6} h={23} />
          </Row>
          <GroupBox>
            <GroupCol $w={152}>
              <GroupLabel><u>T</u>ilgjengelige grupper:</GroupLabel>
              <ListBox>
                <ListItems>
                  {groups.map((g, i) => <ListItem key={g} $focus={i === 0}>{g}</ListItem>)}
                </ListItems>
                <ListScroll>
                  <ScrollEnd><Tri $dir="up" /></ScrollEnd>
                  <ScrollThumb />
                  <Spacer />
                  <ScrollEnd><Tri $dir="down" /></ScrollEnd>
                </ListScroll>
              </ListBox>
            </GroupCol>
            <MoveCol>
              <Btn $w={33} $h={25} $ml={13}><u>&gt;</u></Btn>
              <Btn $w={33} $h={25} $ml={13}><u>&lt;</u></Btn>
            </MoveCol>
            <GroupCol $w={154}>
              <GroupLabel><u>V</u>algte Grupper :</GroupLabel>
              <ListBox><ListItems><ListItem>Anestesi</ListItem></ListItems></ListBox>
            </GroupCol>
          </GroupBox>
          <Row $mt={4}>
            <Label>Dokumentt<u>y</u>pe:</Label>
            <Combo w={272}>Anestesiskjema SK</Combo>
          </Row>
          <Row $mt={8}>
            <Label><u>D</u>okumentbetegnelse:</Label>
            <Field $w={272}>Anestesiskjema SK</Field>
          </Row>
          <Row $mt={8}>
            <Label><u>F</u>orfatter:</Label>
            <Field $w={43} $ls={0.5}>TEST1</Field>
            <BinocBtn w={21} h={22} ml={3} />
            <Field $w={201} $ml={4} $plain>Test, Opprette Bruker, Sykehuset Innland</Field>
          </Row>
          <Row $mt={8}>
            <Label><u>B</u>ehandlende avdeling:</Label>
            <Combo w={55} sel>MEDA</Combo>
            <Field $w={213} $ml={4} $plain>Medisinsk avdeling Gjøvik</Field>
          </Row>
          <Row $mt={6}>
            <Label>Knytt dokument til:</Label>
            <Box $off />
            <CheckText $off>Ingen kontakt valgt</CheckText>
            <Spacer />
            <BinocBtn />
            <EndGap $w={23} />
          </Row>
          <Row $h={16} $mt={1}><IndentText>Henv. 11.01.2007 fra BRA03</IndentText></Row>
          <Row $mt={4}>
            <Label $w={53}>Se<u>k</u>sjon:</Label>
            <Combo w={115} plain />
            <Label $w={29} $ml={14}><u>P</u>ost:</Label>
            <Combo w={57} plain />
            <Field $w={112} $ml={4} $plain />
          </Row>
          <Row $h={21} $mt={2} $low>
            <Label>Knytt til henvisning:</Label>
            <Box />
            <CheckText>Ingen henvisning valgt</CheckText>
            <Spacer />
            <TopSlot><BinocBtn /></TopSlot>
            <EndGap $w={21} />
          </Row>
          <Row $h={21} $mt={3} $low $pb={3}>
            <Label>Knytt til plan. kontakt:</Label>
            <Box />
            <CheckText>Ingen planlagt kontakt valgt</CheckText>
            <Spacer />
            <TopSlot><BinocBtn /></TopSlot>
            <EndGap $w={21} />
          </Row>
          <Row $h={21} $mt={9}>
            <Label>He<u>n</u>delsesdato:</Label>
            <Field $w={68} $h={21}>16.01.2007</Field>
            <Spin />
            <KlLabel>Kl.</KlLabel>
            <Field $w={57} $h={21}>20:00</Field>
            <Spin />
          </Row>
          <DialogButtons $h={26} $mt={10}>
            <Btn><span><u>M</u>er info</span></Btn>
            <Btn $def $ml={67}><span><u>L</u>agre</span></Btn>
            <Btn $ml={12}><span>L<u>u</u>kk</span></Btn>
            <Btn $ml={12}><span><u>H</u>jelp</span></Btn>
          </DialogButtons>
        </Win>

        <Win $x={5} $y={577} $w={158} $h={30}>
          <WinTitle $h={24} $pl={4} $pr={2}>
            <Logo />
            <MiniTitle $spacing={0.5}>Testa, Pr...</MiniTitle>
            <WinControls>
              <WinBtn kind="restore" />
              <WinBtn kind="max" />
              <WinBtn kind="close" />
            </WinControls>
          </WinTitle>
        </Win>
      </Mdi>

      <StatusBar>
        <StatusCell $w={381} />
        <StatusCell $w={88} />
        <StatusCell $w={129}>4.0.0.4 Build SI 012 - Test</StatusCell>
        <StatusCell $w={119}>Anne Hilde Aas</StatusCell>
        <StatusCell $w={118}>Tirsdag 21.08.07 11:15</StatusCell>
        <StatusCell $w={58}>1006023</StatusCell>
        <StatusCell />
      </StatusBar>

      <Taskbar>
        <StartBtn><Mini name="start" />Start</StartBtn>
        <Quick><Mini name="quick" /></Quick>
        <TaskBtn $w={159}><Mini name="clock" />Innboks - Microsoft Outlo...</TaskBtn>
        <TaskBtn $w={161}><Mini name="hand" />Elektronisk kvalitetshåndb...</TaskBtn>
        <TaskBtn $w={159} $on><Logo />DIPS</TaskBtn>
        <TaskBtn $w={161}><Mini name="word" />dok18752 - Microsoft Wor...</TaskBtn>
        <Tray>
          <Mini name="office" />
          <Mini name="office" />
          <Mini name="clock" />
          <Mini name="bin" />
          <Mini name="lock" />
          <Mini name="net" />
          <span>11.15</span>
        </Tray>
      </Taskbar>
    </Screen>
  );
}
